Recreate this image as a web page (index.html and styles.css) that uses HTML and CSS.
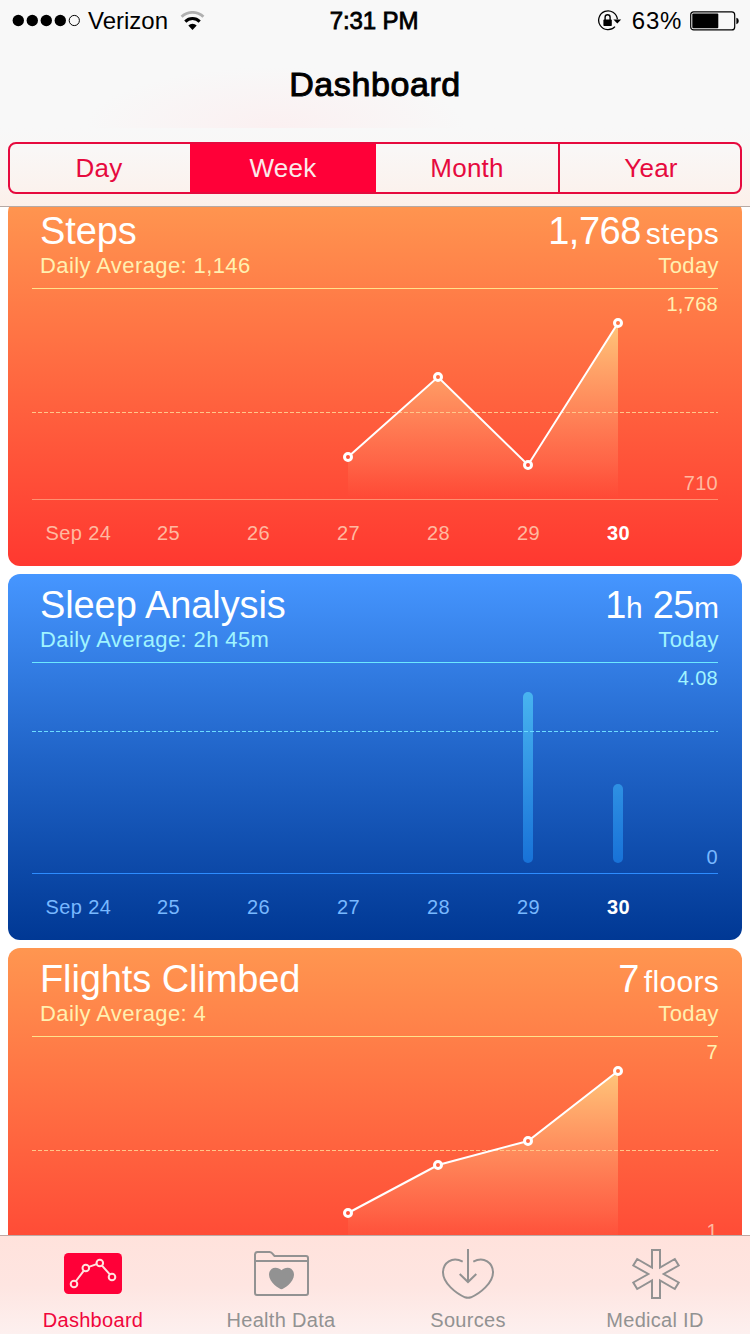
FILE: index.html
```html
<!DOCTYPE html>
<html lang="en">
<head>
    <meta charset="UTF-8">
    <meta name="viewport" content="width=device-width, initial-scale=1.0">
    <title>Dashboard</title>
    <link rel="stylesheet" href="styles.css">
</head>
<body>
    <header class="header">
        <div class="status-bar">
            <div class="status-left">
                <svg class="signal" width="64" height="14" viewBox="0 0 64 14">
                    <circle cx="6.3" cy="6.5" r="5.7"/>
                    <circle cx="20.3" cy="6.5" r="5.7"/>
                    <circle cx="34.3" cy="6.5" r="5.7"/>
                    <circle cx="48.3" cy="6.5" r="5.7"/>
                    <circle cx="62.3" cy="6.5" r="5.1" fill="none" stroke="#000"/>
                </svg>
                <span class="carrier">Verizon</span>
                <svg width="26" height="20" viewBox="0 0 26 20" fill="none">
                    <path d="M1.6 5.8a15.6 15.6 0 0 1 21.8 0" stroke="#b0b0b0" stroke-width="2.8"/>
                    <path d="M5.3 10.6a10.2 10.2 0 0 1 14.4 0" stroke="#000" stroke-width="3"/>
                    <path d="M12.5 19l-4.2-4.5a6 6 0 0 1 8.4 0z" fill="#000"/>
                </svg>
            </div>
            <div class="time">7:31 PM</div>
            <div class="status-right">
                <svg width="26" height="24" viewBox="0 0 26 24" fill="none">
                    <path d="M18 17.6A9.4 9.4 0 1 1 20.4 10.2" stroke="#000" stroke-width="1.3"/>
                    <path d="M16.4 10.6h7.8l-3.9 4z" fill="#000"/>
                    <rect x="6.4" y="10.6" width="8.4" height="6.4" rx="0.8" fill="#000"/>
                    <path d="M8.1 11V8.2a2.5 2.5 0 0 1 5 0V11" stroke="#000" stroke-width="1.4"/>
                </svg>
                <span class="percent">63%</span>
                <svg width="50" height="20" viewBox="0 0 50 20">
                    <rect x="0.7" y="0.9" width="44" height="18" rx="3" fill="none" stroke="#000" stroke-width="1.2"/>
                    <rect x="2.3" y="2.5" width="26" height="14.8" rx="1"/>
                    <path d="M46.4 6.8q2.4.6 2.4 3.2t-2.4 3.2z"/>
                </svg>
            </div>
        </div>
        <h1>Dashboard</h1>
        <div class="segments">
            <button class="segment day">Day</button>
            <button class="segment week active">Week</button>
            <button class="segment month">Month</button>
            <button class="segment year">Year</button>
        </div>
    </header>

    <main class="cards">
        <section class="card orange">
            <div class="card-head">
                <div>
                    <h2>Steps</h2>
                    <p>Daily Average: 1,146</p>
                </div>
                <div class="today">
                    <div class="value">1,768<small class="unit">steps</small></div>
                    <p>Today</p>
                </div>
            </div>
            <div class="chart">
                <svg width="686" height="211" viewBox="0 0 686 211">
                    <defs>
                        <linearGradient id="steps-fill" gradientUnits="userSpaceOnUse" x1="0" y1="34" x2="0" y2="209">
                            <stop offset="0" stop-color="#ffcf80" stop-opacity="0.9"/>
                            <stop offset="0.5" stop-color="#ffa670" stop-opacity="0.55"/>
                            <stop offset="0.8" stop-color="#ff9068" stop-opacity="0.28"/>
                            <stop offset="1" stop-color="#ff8060" stop-opacity="0"/>
                        </linearGradient>
                    </defs>
                    <path class="area" fill="url(#steps-fill)" d="M316 168L406 88L496 176L586 34V209H316z"/>
                    <path class="average" d="M0 123.5H686"/>
                    <path class="line" d="M316 168L406 88L496 176L586 34"/>
                    <g class="dots">
                        <circle cx="316" cy="168" r="3.5" fill="#ff523b"/>
                        <circle cx="406" cy="88" r="3.5" fill="#ff7044"/>
                        <circle cx="496" cy="176" r="3.5" fill="#ff523b"/>
                        <circle cx="586" cy="34" r="3.5" fill="#ff7645"/>
                    </g>
                </svg>
                <span class="max">1,768</span>
                <span class="min">710</span>
            </div>
            <div class="dates">
                <span>Sep 24</span><span>25</span><span>26</span><span>27</span><span>28</span><span>29</span><span class="current">30</span>
            </div>
        </section>

        <section class="card blue">
            <div class="card-head">
                <div>
                    <h2>Sleep Analysis</h2>
                    <p>Daily Average: 2h 45m</p>
                </div>
                <div class="today">
                    <div class="value">1<small>h</small> 25<small>m</small></div>
                    <p>Today</p>
                </div>
            </div>
            <div class="chart">
                <svg width="686" height="211" viewBox="0 0 686 211">
                    <defs>
                        <linearGradient id="sleep-fill" gradientUnits="userSpaceOnUse" x1="0" y1="29" x2="0" y2="200">
                            <stop offset="0" stop-color="#48b4f0"/>
                            <stop offset="1" stop-color="#1872d8"/>
                        </linearGradient>
                    </defs>
                    <rect x="491" y="29" width="10" height="171" rx="5" fill="url(#sleep-fill)"/>
                    <rect x="581" y="121" width="10" height="79" rx="5" fill="url(#sleep-fill)"/>
                    <path class="average" d="M0 68.5H686"/>
                </svg>
                <span class="max">4.08</span>
                <span class="min">0</span>
            </div>
            <div class="dates">
                <span>Sep 24</span><span>25</span><span>26</span><span>27</span><span>28</span><span>29</span><span class="current">30</span>
            </div>
        </section>

        <section class="card orange">
            <div class="card-head">
                <div>
                    <h2>Flights Climbed</h2>
                    <p>Daily Average: 4</p>
                </div>
                <div class="today">
                    <div class="value">7<small class="unit">floors</small></div>
                    <p>Today</p>
                </div>
            </div>
            <div class="chart">
                <svg width="686" height="211" viewBox="0 0 686 211">
                    <path class="area" fill="url(#steps-fill)" d="M316 176L406 128L496 104L586 34V209H316z"/>
                    <path class="average" d="M0 113.5H686"/>
                    <path class="line" d="M316 176L406 128L496 104L586 34"/>
                    <g class="dots">
                        <circle cx="316" cy="176" r="3.5" fill="#ff523b"/>
                        <circle cx="406" cy="128" r="3.5" fill="#ff6440"/>
                        <circle cx="496" cy="104" r="3.5" fill="#ff6842"/>
                        <circle cx="586" cy="34" r="3.5" fill="#ff7645"/>
                    </g>
                </svg>
                <span class="max">7</span>
                <span class="min">1</span>
            </div>
        </section>
    </main>

    <nav class="tab-bar">
        <a class="tab active">
            <svg width="60" height="52" viewBox="0 0 60 52" fill="none">
                <rect x="1" y="5" width="58" height="41" rx="4.5" fill="#ff0038"/>
                <g stroke="#ffe2de" stroke-width="2">
                    <path d="M13 33L20.7 22.8M25.9 18.9L33.6 16.1M39 17.6L46.8 26.4"/>
                    <circle cx="11" cy="36" r="3.3"/>
                    <circle cx="22.8" cy="20" r="3.3"/>
                    <circle cx="36.8" cy="15" r="3.3"/>
                    <circle cx="49" cy="29" r="3.3"/>
                </g>
            </svg>
            <span>Dashboard</span>
        </a>
        <a class="tab">
            <svg width="60" height="52" viewBox="1 0 60 52" fill="none" stroke="#929292" stroke-width="2">
                <path d="M5 6.5Q5 4 7.5 4H19.5Q21 4 22 5.2L24.5 8H56Q58 8 58 10V45Q58 47 56 47H7Q5 47 5 45zM5 13H58"/>
                <path fill="#929292" stroke="none" d="M31.5 41.3C29.8 41.3 19 34.5 19 26.8C19 22.5 22 19.8 25.3 19.8C28 19.8 30 21 31.5 22.2C33 21 35 19.8 37.7 19.8C41 19.8 44 22.5 44 26.8C44 34.5 33.2 41.3 31.5 41.3z"/>
            </svg>
            <span>Health Data</span>
        </a>
        <a class="tab">
            <svg width="60" height="52" viewBox="0 0 60 52" fill="none" stroke="#929292" stroke-width="2">
                <path d="M24.7 13.6C14 8 5 15 5 24.5C5 35 18 45.5 27 49.3Q30 50.4 33 49.3C42 45.5 55 35 55 24.5C55 15 46 8 35.3 13.6"/>
                <path d="M30 1V33.5M21.7 26L30 34L38.3 26"/>
            </svg>
            <span>Sources</span>
        </a>
        <a class="tab">
            <svg width="60" height="52" viewBox="-1 0 60 52" fill="none" stroke="#929292" stroke-width="2">
                <path d="M26 2H34V19.5L48.8 11L52.7 17.5L37.7 26L52.7 34.5L48.8 41L34 32.5V50H26V32.5L11.2 41L7.3 34.5L22.3 26L7.3 17.5L11.2 11L26 19.5z"/>
            </svg>
            <span>Medical ID</span>
        </a>
    </nav>
</body>
</html>
```
FILE: styles.css
```css
* {
    box-sizing: border-box;
}

body {
    display: flex;
    flex-direction: column;
    width: 750px;
    height: 1334px;
    margin: 0;
    overflow: hidden;
    background-color: #fff;
    font-family: "Liberation Sans", Arial, sans-serif;
}

h1, h2, p {
    margin: 0;
    font-weight: normal;
}

svg {
    display: block;
    flex: none;
}

/* Header */
.header {
    flex: none;
    height: 207px;
    border-bottom: 1px solid #b5a9a5;
    background: radial-gradient(ellipse 190px 60px at 275px 127px, #fbf0f1, rgba(251, 240, 241, 0)) no-repeat 0 0 / 750px 128px,
        linear-gradient(#f8f8f8 128px, #f9f7f6 150px, #fcf0ea);
}

.status-bar {
    display: grid;
    grid-template-columns: 1fr auto 1fr;
    align-items: center;
    height: 41px;
    padding: 0 10px 0 12px;
    font-size: 24px;
}

.status-left,
.status-right {
    display: flex;
    align-items: center;
}

.status-right {
    justify-content: flex-end;
}

.signal {
    overflow: visible;
}

.carrier {
    margin: 0 12px;
}

.time {
    margin-right: 4px;
    letter-spacing: -0.1px;
    -webkit-text-stroke: 0.8px #000;
}

.percent {
    margin: 0 8px 0 9px;
    letter-spacing: 0.7px;
}

h1 {
    height: 101px;
    line-height: 86px;
    text-align: center;
    font-size: 34px;
    letter-spacing: 0.6px;
    -webkit-text-stroke: 1px #000;
}

.segments {
    display: grid;
    grid-template-columns: 180px 186px 184px 180px;
    height: 52px;
    margin: 0 8px;
    border: 2px solid #e60a3e;
    border-radius: 8px;
    overflow: hidden;
}

.segment {
    padding: 0;
    border: none;
    background: none;
    color: #e60a3e;
    font-family: inherit;
    font-size: 26px;
    letter-spacing: 0.2px;
}

.segment.day {
    padding-right: 2px;
}

.segment.year {
    padding-left: 2px;
}

.segment.active {
    background-color: #ff0038;
    color: #fbe9ea;
}

.segment.month {
    border-right: 2px solid #e60a3e;
}

/* Cards */
.cards {
    display: flex;
    flex: 1;
    flex-direction: column;
    gap: 8px;
    min-height: 0;
    padding: 0 8px;
    overflow: hidden;
}

.card {
    flex: none;
    height: 366px;
    padding: 0 24px;
    border-radius: 12px;
    color: #fff;
}

/* first card is scrolled slightly under the header */
.card:first-child {
    margin-top: -7px;
}

.card.orange {
    --accent: #fff0b0;
    --rule: #ffe28c;
    --average: #ffc68a;
    --base: #ff9070;
    --axis: #ffb9a0;
    background: linear-gradient(#ff9650, #ff6740 50%, #ff3830);
}

.card.blue {
    --accent: #a0f4ff;
    --rule: #6ce8ff;
    --average: #6cdcff;
    --base: #2c8cff;
    --axis: #78b8ff;
    background: linear-gradient(#4696ff, #2064c8 50%, #003894);
}

.card-head {
    display: flex;
    justify-content: space-between;
    height: 89px;
    padding: 9px 0 0 8px;
    border-bottom: 1px solid var(--rule);
}

h2,
.value {
    height: 44px;
    line-height: 45px;
    font-size: 38px;
    letter-spacing: -0.1px;
    white-space: pre;
}

.value {
    margin-right: -1px;
    letter-spacing: -0.5px;
}

.value small {
    font-size: 30px;
    letter-spacing: 0;
}

.value .unit {
    margin-left: 5px;
    letter-spacing: 0.3px;
}

.card-head p {
    line-height: 25px;
    color: var(--accent);
    font-size: 22px;
    letter-spacing: 0.4px;
}

.today {
    text-align: right;
}

.today p {
    margin-right: -1px;
}

.chart {
    position: relative;
    height: 211px;
    border-bottom: 1px solid var(--base);
    font-size: 20px;
    letter-spacing: 0.3px;
}

.average {
    stroke: var(--average);
    stroke-dasharray: 4 2;
}

.line {
    fill: none;
    stroke: #fff;
    stroke-width: 2;
}

.dots {
    stroke: #fff;
    stroke-width: 3;
}

.max,
.min {
    position: absolute;
    right: 0;
    line-height: 24px;
}

.max {
    top: 3px;
    color: var(--accent);
}

.min {
    bottom: 4px;
    color: var(--axis);
}

.dates {
    display: grid;
    grid-template-columns: repeat(7, 90px);
    padding-left: 1.5px;
    line-height: 66px;
    text-align: center;
    color: var(--axis);
    font-size: 20px;
    letter-spacing: 0.4px;
}

.dates .current {
    color: #fff;
    font-weight: bold;
}

/* Tab bar */
.tab-bar {
    display: grid;
    flex: none;
    grid-template-columns: 186px 190px 184px 190px;
    height: 99px;
    padding-top: 12px;
    border-top: 1px solid #c0a8a4;
    background: linear-gradient(#ffe2dc, #fee5e1 50%, #fdf0ef);
}

.tab {
    display: flex;
    flex-direction: column;
    align-items: center;
    color: #929292;
    font-size: 20px;
    letter-spacing: 0.3px;
}

.tab span {
    margin-top: 8px;
    line-height: 24px;
}

.tab.active {
    color: #f0063c;
}
```
